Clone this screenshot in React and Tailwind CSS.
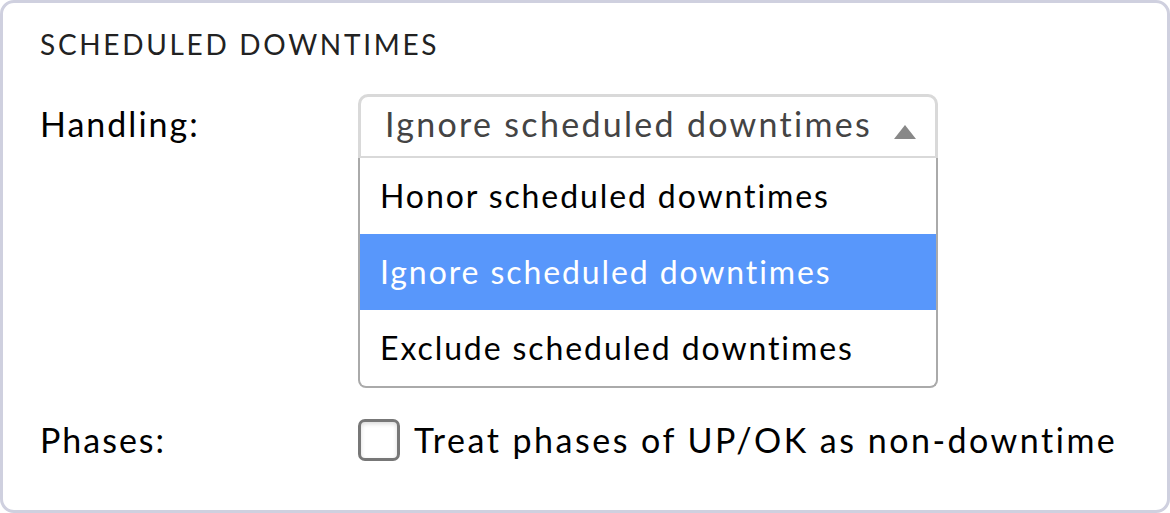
import React from 'react';

const options = [
  { label: 'Honor scheduled downtimes', active: false },
  { label: 'Ignore scheduled downtimes', active: true },
  { label: 'Exclude scheduled downtimes', active: false },
];

const App = () => {
  return (
    <div className="w-[1170px] h-[513px] bg-white font-['Lato','Noto_Sans',sans-serif] text-black">
      <div className="h-full border-[3px] border-[#cfd0df] rounded-[14px] pl-[37px] pr-[30px] pt-[21px]">
        <h2 className="text-[28px] leading-[40px] tracking-[2.7px] text-[#222]">SCHEDULED DOWNTIMES</h2>

        {/* Handling */}
        <div className="flex mt-[30px]">
          <div className="w-[318px] text-[34px] leading-[60px] tracking-[2px]">Handling:</div>
          <div className="w-[580px]">
            <div className="h-[64px] border-[3px] border-b-[2px] border-[#d9d9d9] rounded-t-[10px] flex items-start justify-between pl-[24px] pr-[18px]">
              <span className="text-[34px] leading-[54px] tracking-[2.3px] text-[#444]">Ignore scheduled downtimes</span>
              <svg className="mt-[27px]" width="24" height="16" viewBox="0 0 24 16">
                <polygon points="12,1 23,15 1,15" fill="#888" />
              </svg>
            </div>
            <ul className="border-[2px] border-t-0 border-[#aaa] rounded-b-[8px] overflow-hidden">
              {options.map((o) => (
                <li
                  key={o.label}
                  className={`h-[76px] flex items-center pl-[20px] pb-[1px] text-[32px] tracking-[1.9px] ${
                    o.active ? 'bg-[#5897fb] text-white' : 'text-black'
                  }`}
                >
                  {o.label}
                </li>
              ))}
            </ul>
          </div>
        </div>

        {/* Phases */}
        <div className="flex mt-[31px] items-start">
          <div className="w-[318px] text-[34px] leading-[42px] tracking-[2px]">Phases:</div>
          <label className="flex items-start gap-[14px]">
            <span className="w-[42px] h-[42px] border-[3px] border-[#777] rounded-[7px] bg-white shadow-[inset_0_2px_4px_rgba(0,0,0,0.15)]" />
            <span className="text-[34px] leading-[42px] tracking-[2.5px]">Treat phases of UP/OK as non-downtime</span>
          </label>
        </div>
      </div>
    </div>
  );
};

export default App;
